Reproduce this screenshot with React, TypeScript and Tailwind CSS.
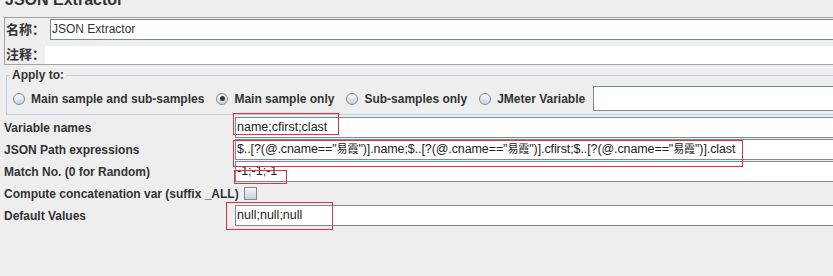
import React from 'react'

const font = "font-['Liberation_Sans','Noto_Sans_CJK_SC',sans-serif]"

function Radio({ checked }: { checked?: boolean }) {
  return (
    <span className="flex h-[12px] w-[12px] shrink-0 items-center justify-center rounded-full border border-[#7a8a99] bg-linear-to-b from-white to-[#c3d1de]">
      {checked && <span className="h-[5px] w-[5px] rounded-full bg-[#333333]" />}
    </span>
  )
}

function Field({ children, tight }: { children?: React.ReactNode; tight?: boolean }) {
  return (
    <div
      className={`h-[21px] border border-[#7a8a99] bg-white pl-[1px] text-[12.5px] font-normal leading-[19px] whitespace-nowrap text-[#222222] ${
        tight ? 'tracking-[-0.1px]' : ''
      }`}
    >
      {children}
    </div>
  )
}

// 한자 부분은 조금 작게
function Cjk({ children }: { children: React.ReactNode }) {
  return <span className="text-[11px]">{children}</span>
}

export default function App() {
  const radios = [
    { label: 'Main sample and sub-samples', checked: false },
    { label: 'Main sample only', checked: true },
    { label: 'Sub-samples only', checked: false },
    { label: 'JMeter Variable', checked: false },
  ]

  const parts = ['name', 'cfirst', 'clast']

  return (
    <div className={`relative h-[276px] w-[833px] overflow-hidden bg-[#eeeeee] text-[#333333] ${font}`}>
      <div className="w-[880px]">
        {/* 제목 */}
        <div className="h-[17px] overflow-hidden pl-[5px]">
          <div className="mt-[-8px] text-[16px] font-bold leading-[16px]">JSON Extractor</div>
        </div>

        {/* 이름 / 주석 */}
        <div className="ml-[4px] border border-[#a3a3a3]">
          <div className="flex h-[28px] items-start">
            <div className="mt-[1px] flex h-[21px] w-[45px] items-center pl-[1px] text-[13px] font-bold">名称：</div>
            <div className="mt-[1px] h-[21px] flex-1 border border-[#7a8a99] bg-white pl-[1px] text-[12px] leading-[19px]">
              JSON Extractor
            </div>
          </div>
          <div className="flex h-[18px]">
            <div className="flex w-[40px] items-center pl-[1px] text-[13px] font-bold">注释：</div>
            <div className="flex-1 bg-white" />
          </div>
        </div>

        {/* Apply to */}
        <fieldset className="ml-[6px] mt-[3px] border border-[#b8cfe5] pb-[3px] pt-[4px]">
          <legend className="ml-[3px] px-[2px] text-[12px] font-bold leading-[14px]">Apply to:</legend>
          <div className="flex h-[25px] items-center pl-[6px]">
            {radios.map((r, i) => (
              <div key={r.label} className={`flex items-center gap-[6px] ${i > 0 ? 'ml-[12px]' : ''}`}>
                <Radio checked={r.checked} />
                <span className="text-[12px] font-bold">{r.label}</span>
              </div>
            ))}
            <div className="ml-[8px] h-[25px] flex-1 border border-[#7a8a99] bg-white" />
          </div>
        </fieldset>

        {/* 추출 설정 */}
        <div className="mt-[2px] flex flex-col gap-[1px] pl-[4px] text-[12px] font-bold">
          <div className="grid h-[21px] grid-cols-[231px_1fr] items-center">
            <span>Variable names</span>
            <Field>name;cfirst;clast</Field>
          </div>
          <div className="grid h-[21px] grid-cols-[231px_1fr] items-center">
            <span>JSON Path expressions</span>
            <Field tight>
              {parts.map((p, i) => (
                <React.Fragment key={p}>
                  {i > 0 && ';'}
                  $..[?(@.cname==&quot;<Cjk>易霞</Cjk>&quot;)].{p}
                </React.Fragment>
              ))}
            </Field>
          </div>
          <div className="grid h-[21px] grid-cols-[231px_1fr] items-center">
            <span>Match No. (0 for Random)</span>
            <Field>-1;-1;-1</Field>
          </div>
          <div className="flex h-[21px] items-center">
            <span>Compute concatenation var (suffix _ALL)</span>
            <span className="ml-[5px] h-[13px] w-[13px] border border-[#7a8a99] bg-linear-to-b from-[#f4f7fa] to-[#c3d1de]" />
          </div>
          <div className="grid h-[21px] grid-cols-[231px_1fr] items-center">
            <span>Default Values</span>
            <Field>null;null;null</Field>
          </div>
        </div>
      </div>

      {/* 빨간 표시 상자 */}
      <div className="absolute left-[233px] top-[113px] h-[22px] w-[106px] border border-[#e8303a]" />
      <div className="absolute left-[233px] top-[140px] h-[27px] w-[510px] border border-[#e8303a]" />
      <div className="absolute left-[234px] top-[170px] h-[14px] w-[53px] border border-[#e8303a]" />
      <div className="absolute left-[226px] top-[202px] h-[28px] w-[107px] border border-[#e8303a]" />
    </div>
  )
}
